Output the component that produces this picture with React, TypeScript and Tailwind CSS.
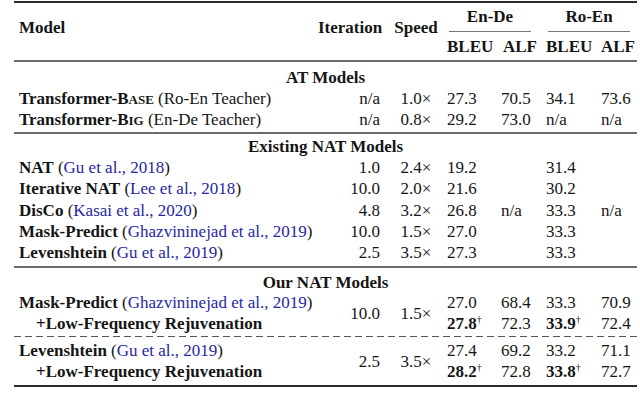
import React from "react";

// column widths taken from the reference: model | iteration | speed | BLEU | ALF | BLEU | ALF
const COLS = "grid grid-cols-[304px_67px_62px_54px_45px_55px_36px]";

type Row = {
  name: React.ReactNode;
  it?: string;
  sp?: string;
  b1?: React.ReactNode;
  a1?: string;
  b2?: React.ReactNode;
  a2?: string;
};

function Cite({ children }: { children: React.ReactNode }) {
  return <span className="text-[#2626a4]">{children}</span>;
}

function Best({ v }: { v: string }) {
  return (
    <span>
      <span className="font-bold">{v}</span>
      <span className="text-[10px] leading-none align-[6px]">†</span>
    </span>
  );
}

function Name({ b, c }: { b: React.ReactNode; c?: string }) {
  return (
    <>
      <span className="font-bold">{b}</span>
      {c && (
        <>
          {" "}(<Cite>{c}</Cite>)
        </>
      )}
    </>
  );
}

function DataRow({ r, h = "h-[21px]" }: { r: Row; h?: string }) {
  return (
    <div className={`${COLS} ${h}`}>
      <div className="pl-[5px] whitespace-nowrap">{r.name}</div>
      <div className="text-right pr-[5px]">{r.it}</div>
      <div className="text-center">{r.sp}</div>
      <div>{r.b1}</div>
      <div>{r.a1}</div>
      <div>{r.b2}</div>
      <div>{r.a2}</div>
    </div>
  );
}

function Label({ children }: { children: React.ReactNode }) {
  return <div className="h-[21px] text-center font-bold">{children}</div>;
}

function PairRow({
  name,
  it,
  sp,
  top,
  bottom,
}: {
  name: React.ReactNode;
  it: string;
  sp: string;
  top: React.ReactNode[];
  bottom: React.ReactNode[];
}) {
  return (
    <div className={`${COLS} grid-rows-[21px_21px]`}>
      <div className="pl-[5px] whitespace-nowrap">{name}</div>
      <div className="row-span-2 self-center text-right pr-[5px]">{it}</div>
      <div className="row-span-2 self-center text-center">{sp}</div>
      {top.map((v, i) => (
        <div key={i}>{v}</div>
      ))}
      <div className="pl-[22px] font-bold whitespace-nowrap">+Low-Frequency Rejuvenation</div>
      {bottom.map((v, i) => (
        <div key={i}>{v}</div>
      ))}
    </div>
  );
}

const existing: Row[] = [
  { name: <Name b="NAT" c="Gu et al., 2018" />, it: "1.0", sp: "2.4×", b1: "19.2", b2: "31.4" },
  { name: <Name b="Iterative NAT" c="Lee et al., 2018" />, it: "10.0", sp: "2.0×", b1: "21.6", b2: "30.2" },
  { name: <Name b="DisCo" c="Kasai et al., 2020" />, it: "4.8", sp: "3.2×", b1: "26.8", a1: "n/a", b2: "33.3", a2: "n/a" },
  { name: <Name b="Mask-Predict" c="Ghazvininejad et al., 2019" />, it: "10.0", sp: "1.5×", b1: "27.0", b2: "33.3" },
  { name: <Name b="Levenshtein" c="Gu et al., 2019" />, it: "2.5", sp: "3.5×", b1: "27.3", b2: "33.3" },
];

export default function App() {
  return (
    <div className="w-[640px] h-[404px] bg-white font-['Liberation_Serif',serif] text-[17px] leading-[21px] text-[#151515]">
      <div className="ml-[14px] w-[623px] pt-[1px]">
        <div className="h-[2px] bg-[#2b2b2b]" />

        {/* header */}
        <div className={`${COLS} h-[57px] font-bold`}>
          <div className="pl-[5px] pt-[14px]">Model</div>
          <div className="pt-[14px] text-right pr-[5px]">Iteration</div>
          <div className="pt-[14px] text-center">Speed</div>
          <div className="col-span-2 pt-[3px]">
            <div className="ml-[2px] w-[82px] text-center">En-De</div>
            <div className="ml-[2px] w-[82px] mt-[4px] h-[1px] bg-[#777]" />
            <div className="grid grid-cols-[54px_45px] mt-[4px]">
              <div>BLEU</div>
              <div className="pl-[2px]">ALF</div>
            </div>
          </div>
          <div className="col-span-2 pt-[3px]">
            <div className="ml-[2px] w-[82px] text-center">Ro-En</div>
            <div className="ml-[2px] w-[82px] mt-[4px] h-[1px] bg-[#777]" />
            <div className="grid grid-cols-[55px_36px] mt-[4px]">
              <div>BLEU</div>
              <div>ALF</div>
            </div>
          </div>
        </div>
        <div className="h-[2px] bg-[#6b6b6b]" />

        {/* AT models */}
        <div className="pt-[5px] pb-[2px]">
          <Label>AT Models</Label>
          <DataRow
            r={{
              name: (
                <>
                  <span className="font-bold">
                    Transformer-B<span className="text-[13px]">ASE</span>
                  </span>{" "}
                  (Ro-En Teacher)
                </>
              ),
              it: "n/a",
              sp: "1.0×",
              b1: "27.3",
              a1: "70.5",
              b2: "34.1",
              a2: "73.6",
            }}
          />
          <DataRow
            r={{
              name: (
                <>
                  <span className="font-bold">
                    Transformer-B<span className="text-[13px]">IG</span>
                  </span>{" "}
                  (En-De Teacher)
                </>
              ),
              it: "n/a",
              sp: "0.8×",
              b1: "29.2",
              a1: "73.0",
              b2: "n/a",
              a2: "n/a",
            }}
          />
        </div>
        <div className="h-[2px] bg-[#6b6b6b]" />

        {/* existing NAT */}
        <div className="pt-[2px] pb-[2.75px]">
          <Label>Existing NAT Models</Label>
          {existing.map((r, i) => (
            <DataRow key={i} r={r} h="h-[21.25px]" />
          ))}
        </div>
        <div className="h-[2px] bg-[#6b6b6b]" />

        {/* our NAT */}
        <div className="pt-[4px] pb-[3px]">
          <div className="h-[20px] text-center font-bold">Our NAT Models</div>
          <PairRow
            name={<Name b="Mask-Predict" c="Ghazvininejad et al., 2019" />}
            it="10.0"
            sp="1.5×"
            top={["27.0", "68.4", "33.3", "70.9"]}
            bottom={[<Best v="27.8" />, "72.3", <Best v="33.9" />, "72.4"]}
          />
          <div className="py-[2px]">
            <div className="h-[1px] bg-[linear-gradient(90deg,#555_0_7px,transparent_7px_11px)] bg-[length:11px_1px] bg-repeat-x" />
          </div>
          <div className="pt-[1px]">
            <PairRow
              name={<Name b="Levenshtein" c="Gu et al., 2019" />}
              it="2.5"
              sp="3.5×"
              top={["27.4", "69.2", "33.2", "71.1"]}
              bottom={[<Best v="28.2" />, "72.8", <Best v="33.8" />, "72.7"]}
            />
          </div>
        </div>
        <div className="h-[2px] bg-[#2b2b2b]" />
      </div>
    </div>
  );
}
